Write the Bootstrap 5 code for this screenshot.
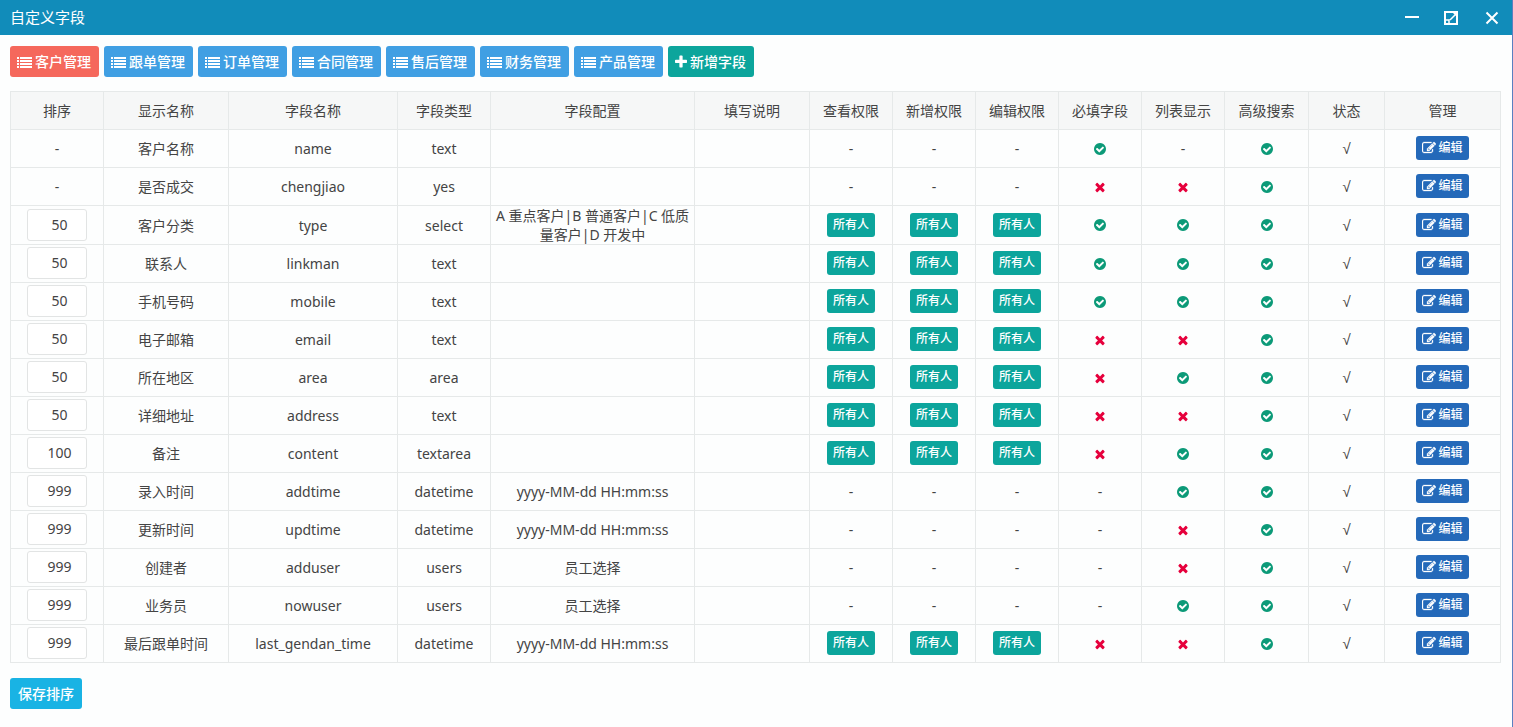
<!DOCTYPE html>
<html lang="zh-CN">
<head>
<meta charset="utf-8">
<meta name="viewport" content="width=device-width, initial-scale=1">
<title>自定义字段</title>
<link href="https://cdn.jsdelivr.net/npm/bootstrap@5.3.0/dist/css/bootstrap.min.css" rel="stylesheet">
<style>
  body { font-family: "Noto Sans", "Noto Sans CJK SC", sans-serif; font-size: 14px; line-height: 19px; color: #444; background: #fdfefe; }
  .dialog-window { border-right: 1px solid #5a7fc0; }
  .dialog-title { height: 35px; background: #118cba; color: #fff; padding: 0 12px 0 10px; }
  .dialog-title h1 { font-size: 15px; line-height: 20px; font-weight: 400; padding-bottom: 2px; }
  .win-btn { width: 16px; height: 16px; color: #fff; line-height: 0; }
  .win-btn svg { width: 16px; height: 16px; }
  .dialog-content { padding: 11px 11px 18px 10px; }
  .module-tabs { gap: 5px; }
  .tool-btn { --bs-btn-font-size: 14px; --bs-btn-font-weight: 500; --bs-btn-line-height: 19px; --bs-btn-border-radius: 3px; --bs-btn-color: #fff; --bs-btn-hover-color: #fff; padding: 5px 7px 5px 6px; height: 31px; }
  .tone-red { --bs-btn-bg: #f5685c; --bs-btn-hover-bg: #e2574b; }
  .tone-blue { --bs-btn-bg: #409fe3; --bs-btn-hover-bg: #338fd0; }
  .tone-green { --bs-btn-bg: #0ca59c; --bs-btn-hover-bg: #09908a; }
  .tone-navy { --bs-btn-bg: #2469b9; --bs-btn-hover-bg: #1c5aa2; }
  .tone-cyan { --bs-btn-bg: #19b3e4; --bs-btn-hover-bg: #109fcd; }
  .cell-btn { --bs-btn-font-size: 12px; --bs-btn-font-weight: 500; --bs-btn-line-height: 18px; --bs-btn-border-radius: 3px; --bs-btn-color: #fff; --bs-btn-hover-color: #fff; padding: 2px 5px; height: 24px; margin-bottom: 1px; }
  .icon-glyph { fill: currentColor; flex: none; }
  .glyph-list { width: 15px; height: 14px; }
  .glyph-plus { width: 12px; height: 14px; }
  .glyph-mark { width: 14px; height: 14px; }
  td > .glyph-mark { display: block; margin: 0 auto; }
  .mark-yes { color: #0c9a78; }
  .mark-no { color: #e6003c; }
  .module-text { margin-left: 3px; }
  .edit-text { margin-left: 2px; }
  .field-table { table-layout: fixed; margin: 14px 0 15px; --bs-table-bg: transparent; --bs-table-color: #444; border-color: #e6e9e9; }
  .field-table > :not(caption) > * > * { padding: 0 4px; height: 38px; border-color: #e6e9e9; vertical-align: middle; }
  .field-table thead th { font-weight: 400; background: #f6f7f7; }
  .c-sort, .c-type { width: 93px; } .c-label { width: 125px; } .c-name { width: 169px; }
  .c-config { width: 204px; } .c-note { width: 115px; } .c-flag { width: 83px; } .c-search { width: 84px; }
  .c-state { width: 76px; } .c-action { width: 116px; }
  .state-mark { font-family: "Liberation Sans", sans-serif; font-size: 15px; line-height: 18px; }
  .sort-input { width: 60px; height: 32px; min-height: 0; margin: 0 auto 1px; padding: 0 0 1px 5px; font-size: 14px; line-height: 19px; color: #444; text-align: center; border: 1px solid #e2e4e4; border-radius: 3px; background: #fff; }
</style>
</head>
<body>
<svg class="d-none" aria-hidden="true">
  <symbol id="list" viewBox="0 0 15 14"><path d="M0 2h2v2H0zM3 2h12v2H3zM0 5h2v2H0zM3 5h12v2H3zM0 8h2v2H0zM3 8h12v2H3zM0 11h2v2H0zM3 11h12v2H3z"/></symbol>
  <symbol id="plus" viewBox="192 128 1408 1536"><path d="M1600 736v192q0 40-28 68t-68 28h-416v416q0 40-28 68t-68 28h-192q-40 0-68-28t-28-68v-416h-416q-40 0-68-28t-28-68v-192q0-40 28-68t68-28h416v-416q0-40 28-68t68-28h192q40 0 68 28t28 68v416h416q40 0 68 28t28 68z"/></symbol>
  <symbol id="yes" viewBox="0 0 1792 1792"><path d="M1412 734q0-28-18-46l-91-90q-19-19-45-19t-45 19l-408 407-226-226q-19-19-45-19t-45 19l-91 90q-18 18-18 46 0 27 18 45l362 362q19 19 45 19 27 0 46-19l543-543q18-18 18-45zm252 162q0 209-103 385.500t-279.500 279.500-385.500 103-385.500-103-279.500-279.500-103-385.500 103-385.500 279.500-279.500 385.500-103 385.500 103 279.500 279.500 103 385.500z"/></symbol>
  <symbol id="no" viewBox="0 0 1792 1792"><path d="M1490 1322q0 40-28 68l-136 136q-28 28-68 28t-68-28l-294-294-294 294q-28 28-68 28t-68-28l-136-136q-28-28-28-68t28-68l294-294-294-294q-28-28-28-68t28-68l136-136q28-28 68-28t68 28l294 294 294-294q28-28 68-28t68 28l136 136q28 28 28 68t-28 68l-294 294 294 294q28 28 28 68z"/></symbol>
  <symbol id="edit" viewBox="0 0 1792 1792"><path stroke="currentColor" stroke-width="40" d="M888 1184l116-116-152-152-116 116v56h96v96h56zm440-720q-16-16-33 1l-350 350q-17 17-1 33t33-1l350-350q17-17 1-33zm80 594v190q0 119-84.500 203.500t-203.500 84.500h-832q-119 0-203.500-84.500t-84.500-203.500v-832q0-119 84.500-203.500t203.500-84.500h832q63 0 117 25 15 7 18 23 3 17-9 29l-49 49q-14 14-32 8-23-6-45-6h-832q-66 0-113 47t-47 113v832q0 66 47 113t113 47h832q66 0 113-47t47-113v-126q0-13 9-22l64-64q15-15 35-7t20 29zm-96-738l288 288-672 672h-288v-288zm444 132l-92 92-288-288 92-92q28-28 68-28t68 28l152 152q28 28 28 68t-28 68z"/></symbol>
</svg>

<div class="dialog-window min-vh-100">
  <header class="dialog-title d-flex align-items-center justify-content-between">
    <h1 class="m-0">自定义字段</h1>
    <div class="d-flex gap-4">
      <button type="button" class="win-btn btn p-0 border-0" aria-label="最小化"><svg viewBox="0 0 16 16"><path d="M1 6h14v2H1z" fill="currentColor"/></svg></button>
      <button type="button" class="win-btn btn p-0 border-0" aria-label="最大化"><svg viewBox="0 0 16 16" fill="none" stroke="currentColor" stroke-width="2"><path d="M1 2h12v12H1z"/><path d="M2 10h3v3M6 10l6-6" stroke-width="1.500"/><path d="M9 3h3v3z" fill="currentColor" stroke="none"/></svg></button>
      <button type="button" class="win-btn btn p-0 border-0" aria-label="关闭"><svg viewBox="0 0 16 16" fill="none" stroke="currentColor" stroke-width="2"><path d="M2.500 2.500l11 11M13.500 2.500l-11 11"/></svg></button>
    </div>
  </header>

  <main class="dialog-content">
    <nav class="module-tabs d-flex flex-wrap" id="modules"></nav>
    <form>
      <table class="table table-bordered field-table text-center align-middle">
        <colgroup>
          <col class="c-sort"><col class="c-label"><col class="c-name"><col class="c-type"><col class="c-config"><col class="c-note">
          <col class="c-flag"><col class="c-flag"><col class="c-flag"><col class="c-flag"><col class="c-flag"><col class="c-search">
          <col class="c-state"><col class="c-action">
        </colgroup>
        <thead>
          <tr><th>排序</th><th>显示名称</th><th>字段名称</th><th>字段类型</th><th>字段配置</th><th>填写说明</th><th>查看权限</th><th>新增权限</th><th>编辑权限</th><th>必填字段</th><th>列表显示</th><th>高级搜索</th><th>状态</th><th>管理</th></tr>
        </thead>
        <tbody id="fields"></tbody>
      </table>
      <button type="button" class="btn tool-btn tone-cyan border-0 px-2">保存排序</button>
    </form>
  </main>
</div>

<script src="https://cdn.jsdelivr.net/npm/bootstrap@5.3.0/dist/js/bootstrap.bundle.min.js"></script>
<script>
  const glyph = (id, cls) => `<svg class="icon-glyph ${cls}" aria-hidden="true"><use href="#${id}"/></svg>`;

  const modules = ['客户管理', '跟单管理', '订单管理', '合同管理', '售后管理', '财务管理', '产品管理'];
  const link = (text, tone, icon) => `<a href="#" class="btn tool-btn ${tone} d-inline-flex align-items-center">${glyph(icon, 'glyph-' + icon)}<span class="module-text">${text}</span></a>`;
  document.getElementById('modules').innerHTML =
    modules.map((m, i) => link(m, i ? 'tone-blue' : 'tone-red', 'list')).join('') + link('新增字段', 'tone-green', 'plus');

  // sort, label, name, type, config, has permissions, then required / listed / searchable (y, n or -)
  const fields = [
    ['-', '客户名称', 'name', 'text', '', 0, 'y-y'],
    ['-', '是否成交', 'chengjiao', 'yes', '', 0, 'nny'],
    [50, '客户分类', 'type', 'select', 'A 重点客户|B 普通客户|C 低质量客户|D 开发中', 1, 'yyy'],
    [50, '联系人', 'linkman', 'text', '', 1, 'yyy'],
    [50, '手机号码', 'mobile', 'text', '', 1, 'yyy'],
    [50, '电子邮箱', 'email', 'text', '', 1, 'nny'],
    [50, '所在地区', 'area', 'area', '', 1, 'nyy'],
    [50, '详细地址', 'address', 'text', '', 1, 'nny'],
    [100, '备注', 'content', 'textarea', '', 1, 'nyy'],
    [999, '录入时间', 'addtime', 'datetime', 'yyyy-MM-dd HH:mm:ss', 0, '-yy'],
    [999, '更新时间', 'updtime', 'datetime', 'yyyy-MM-dd HH:mm:ss', 0, '-ny'],
    [999, '创建者', 'adduser', 'users', '员工选择', 0, '-ny'],
    [999, '业务员', 'nowuser', 'users', '员工选择', 0, '-yy'],
    [999, '最后跟单时间', 'last_gendan_time', 'datetime', 'yyyy-MM-dd HH:mm:ss', 1, 'nny']
  ];
  const marks = { y: glyph('yes', 'glyph-mark mark-yes'), n: glyph('no', 'glyph-mark mark-no'), '-': '-' };
  const cell = html => `<td>${html}</td>`;
  document.getElementById('fields').innerHTML = fields.map(([sort, label, name, type, config, perm, flags]) => {
    const order = sort === '-' ? '-' : `<input type="text" class="form-control sort-input" aria-label="${label} 排序" value="${sort}">`;
    const who = cell(perm ? '<button type="button" class="btn cell-btn tone-green">所有人</button>' : '-');
    const edit = `<a href="#" class="btn cell-btn tone-navy d-inline-flex align-items-center">${glyph('edit', 'glyph-mark')}<span class="edit-text">编辑</span></a>`;
    return `<tr>${[order, label, name, type, config, ''].map(cell).join('')}${who.repeat(3)}${[...flags].map(f => cell(marks[f])).join('')}${cell('<span class="state-mark">√</span>')}${cell(edit)}</tr>`;
  }).join('');
</script>
</body>
</html>
